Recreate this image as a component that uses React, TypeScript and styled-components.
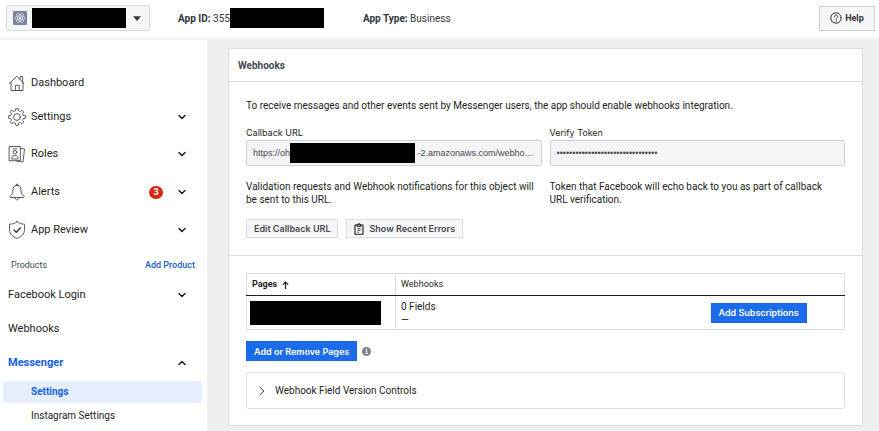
import React from "react";
import styled, { createGlobalStyle, css } from "styled-components";

const GlobalStyle = createGlobalStyle`
  *, *::before, *::after { box-sizing: border-box; }
  html, body { margin: 0; height: 100%; }
  body { background: #efefef; color: #1c1e21; font: 10px/13px Roboto, "Noto Sans", sans-serif; overflow: hidden; }
  #root { height: 100%; }
  button, input { font: inherit; color: inherit; }
  svg { display: block; flex: none; }
`;

const Page = styled.div`
  display: flex;
  flex-direction: column;
  height: 100%;
`;

const TopBar = styled.header`
  display: flex;
  align-items: center;
  height: 40px;
  flex: none;
  padding: 0 4px 2px 6px;
  background: #fff;
  border-bottom: 2px solid #f2f2f2;
  color: #32363d;
`;

const AppPicker = styled.button`
  display: flex;
  align-items: center;
  width: 144px;
  height: 26px;
  padding: 0 8px 0 6px;
  background: #f5f6f7;
  border: 1px solid #d8dade;
  border-radius: 2px;
`;

const Redaction = styled.span<{ $w: number; $h: number }>`
  display: block;
  flex: none;
  width: ${(p) => p.$w}px;
  height: ${(p) => p.$h}px;
  background: #000;
`;

const PickerName = styled.span`
  margin: 0 7px 0 5px;
`;

const Fact = styled.div<{ $gap: number }>`
  display: flex;
  align-items: center;
  margin-left: ${(p) => p.$gap}px;
  white-space: pre;
`;

const HelpButton = styled.button`
  display: flex;
  align-items: center;
  justify-content: center;
  gap: 3px;
  width: 56px;
  height: 25px;
  margin-left: auto;
  padding: 0;
  background: #f5f6f7;
  border: 1px solid #ccd0d5;
  font-size: 9px;
  font-weight: 700;
`;

const Body = styled.div`
  display: flex;
  flex: 1;
  min-height: 0;
`;

const Sidebar = styled.nav`
  flex: none;
  width: 207px;
  padding: 27px 5px 0 3px;
  background: #fff;
  font-size: 11px;
  line-height: 16px;
`;

const NavRow = styled.button<{ $active?: boolean; $h: number }>`
  display: flex;
  align-items: center;
  width: 100%;
  height: ${(p) => p.$h}px;
  padding: 0 16px 0 5px;
  background: none;
  border: 0;
  text-align: left;
  ${(p) =>
    p.$active &&
    css`
      color: #1461e3;
      font-weight: 700;
    `}
  svg.lead { margin-right: 5px; }
`;

const NavLabel = styled.span`
  flex: 1;
`;

const Badge = styled.span`
  width: 14px;
  margin-right: 15px;
  border-radius: 7px;
  background: #d5290f;
  color: #fff;
  font-size: 9px;
  font-weight: 700;
  line-height: 13px;
  text-align: center;
`;

const ProductsRow = styled.div`
  display: flex;
  align-items: center;
  justify-content: space-between;
  height: 32px;
  padding: 0 7px 0 8px;
  color: #444950;
  font-size: 9px;
  a { color: #1461c8; font-weight: 500; text-decoration: none; }
`;

const SubNav = styled.div`
  padding-top: 4px;
`;

const SubLink = styled.a<{ $active?: boolean }>`
  display: block;
  height: 22px;
  padding-left: 28px;
  border-radius: 4px;
  color: #1c1e21;
  font-size: 10px;
  line-height: 22px;
  text-decoration: none;
  & + & { margin-top: 2px; }
  ${(p) =>
    p.$active &&
    css`
      background: #e4eefd;
      color: #1461e3;
      font-weight: 700;
    `}
`;

const Main = styled.main`
  flex: 1;
  min-width: 0;
  padding: 8px 16px 0 21px;
`;

const Card = styled.section`
  background: #fff;
  border: 1px solid #dadcde;
`;

const CardTitle = styled.h2`
  margin: 0;
  padding: 10px 9px 9px;
  border-bottom: 1px solid #dadde1;
  color: #444950;
  font-size: 10px;
  line-height: 13px;
  font-weight: 700;
`;

const Section = styled.div`
  padding: 17px;
  & + & {
    padding-bottom: 16px;
    border-top: 1px solid #dadde1;
  }
`;

const Intro = styled.p`
  margin: 0 0 14px;
`;

const Fields = styled.div`
  display: grid;
  grid-template-columns: 1fr 1fr;
  gap: 8px;
`;

const FieldLabel = styled.label`
  display: block;
  margin-bottom: 1px;
  font-family: Inter, sans-serif;
  font-size: 9px;
  line-height: 13px;
`;

const InputWrap = styled.div`
  position: relative;
`;

const TextInput = styled.input`
  display: block;
  width: 100%;
  height: 26px;
  padding: 0 6px;
  background: #f4f5f7;
  border: 1px solid #ccd0d5;
  border-radius: 3px;
  color: #444950;
  font: 9px "Liberation Sans", sans-serif;
`;

const InputMask = styled(Redaction)`
  position: absolute;
  top: 3px;
  left: 44px;
`;

const FieldNote = styled.p`
  margin: 14px 0 0;
  padding-right: 4px;
`;

const Actions = styled.div<{ $top: number; $gap: number }>`
  display: flex;
  align-items: center;
  gap: ${(p) => p.$gap}px;
  margin-top: ${(p) => p.$top}px;
`;

const Button = styled.button<{ $primary?: boolean }>`
  display: inline-flex;
  align-items: center;
  gap: 5px;
  height: ${(p) => (p.$primary ? 20 : 19)}px;
  padding: 0 7px;
  border: 1px solid ${(p) => (p.$primary ? "#1769ea" : "#dadde1")};
  background: ${(p) => (p.$primary ? "#1a6ced" : "#f5f6f7")};
  color: ${(p) => (p.$primary ? "#fff" : "#444950")};
  font-family: Inter, sans-serif;
  font-size: 9px;
  font-weight: 600;
  white-space: nowrap;
`;

const PagesTable = styled.table`
  width: 100%;
  border-collapse: collapse;
  border: 1px solid #dadde1;
  th, td { padding: 0 5px; text-align: left; }
  th { height: 22px; font-size: 9px; border-bottom: 1px solid #1c1e21; }
  td { height: 34px; }
  th:first-child, td:first-child { width: 149px; border-right: 1px solid #dadde1; }
  td:first-child { padding-left: 3px; }
  th:nth-child(2) { font-weight: 400; }
  td:last-child { width: 139px; }
`;

const SortLabel = styled.span`
  display: flex;
  align-items: center;
  gap: 5px;
`;

const Disclosure = styled.button`
  display: flex;
  align-items: center;
  gap: 9px;
  width: 100%;
  height: 37px;
  margin-top: 11px;
  padding: 0 11px;
  background: #fff;
  border: 1px solid #dadde1;
  border-radius: 3px;
`;

const Chevron = ({ up = false }: { up?: boolean }) => (
  <svg width="8" height="6" viewBox="0 0 8 6" fill="none" stroke="#1c1e21" strokeWidth="1.5" strokeLinecap="round" strokeLinejoin="round">
    <path d={up ? "M1 4.5 4 1.5 7 4.5" : "M1 1.5 4 4.5 7 1.5"} />
  </svg>
);

const lead = {
  className: "lead",
  width: 18,
  height: 18,
  viewBox: "0 0 18 18",
  fill: "none",
  stroke: "#333",
  strokeWidth: 0.8,
  strokeLinejoin: "round" as const,
  strokeLinecap: "round" as const,
};

const HomeIcon = () => (
  <svg {...lead}>
    <path d="M1.2 9.6 9 2.2l6.8 7.4M3 8.2v8.3h12V8.6M7.4 16.5v-5.3h3.8v5.3M12 5.3V2.4h2.6v5.5" />
  </svg>
);

const gearPath = Array.from({ length: 8 }, (_, i) => {
  const at = (r: number, deg: number) => {
    const a = ((i * 45 + deg) * Math.PI) / 180;
    return `${(9 + r * Math.cos(a)).toFixed(2)} ${(9 + r * Math.sin(a)).toFixed(2)}`;
  };
  return `${i ? "L" : "M"}${at(6.5, -14)}L${at(8.4, -9)}L${at(8.4, 9)}L${at(6.5, 14)}L${at(6.3, 22)}`;
}).join("") + "Z";

const GearIcon = () => (
  <svg {...lead}>
    <path d={gearPath} />
    <circle cx="9" cy="9" r="3.4" />
  </svg>
);

const RolesIcon = () => (
  <svg {...lead}>
    <path d="M1.5 1.5h10.8v14.2H1.5zM12.6 3.4l3.9.6-1.5 13-6.2-.9" />
    <circle cx="6.9" cy="7.2" r="1.8" />
    <path d="M3.8 13.6v-.8c0-1.3 1-2.3 3.1-2.3s3.1 1 3.1 2.3v.8zM5 3.9h4" />
  </svg>
);

const BellIcon = () => (
  <svg {...lead}>
    <path d="M9 2.2c-2.7 0-4 2-4 4.8 0 3.4-.9 4.8-2.8 6-.7.5-.4 1.5.4 1.5h12.8c.8 0 1.1-1 .4-1.5-1.9-1.2-2.8-2.600-2.8-6 0-2.800-1.300-4.800-4-4.800ZM8 2.200c0-1.700 2-1.700 2 0M6.900 14.700c0 3 4.200 3 4.200 0" />
  </svg>
);

const ShieldIcon = () => (
  <svg {...lead}>
    <path d="M9 .7c2 1.7 4.5 2.4 7.5 2.5v5.5c0 4.600-3.400 7.100-7.500 8.700-4.100-1.600-7.500-4.100-7.500-8.700V3.200C4.500 3.100 7 2.400 9 .7Z" />
    <path d="m6 9 2.200 2.200L12.300 7" strokeWidth="1.4" />
  </svg>
);

const AtomIcon = () => (
  <svg width="14" height="14" viewBox="0 0 14 14" fill="none" stroke="#dfe3ec" strokeWidth=".7">
    <rect width="14" height="14" rx="1" fill="#79839c" stroke="none" />
    <ellipse cx="7" cy="7" rx="5.2" ry="2.1" />
    <ellipse cx="7" cy="7" rx="5.2" ry="2.1" transform="rotate(60 7 7)" />
    <ellipse cx="7" cy="7" rx="5.2" ry="2.1" transform="rotate(120 7 7)" />
    <circle cx="7" cy="7" r=".9" fill="#fff" />
  </svg>
);

const HelpIcon = () => (
  <svg width="12" height="12" viewBox="0 0 12 12" fill="none" stroke="#32363d" strokeWidth="1" strokeLinecap="round">
    <circle cx="6" cy="6" r="5.2" />
    <path d="M4.4 4.8c0-2.2 3.3-2.1 3.300-.1C7.700 5.900 6 5.800 6 7.200" />
    <circle cx="6" cy="8.9" r=".3" fill="#32363d" strokeWidth=".5" />
  </svg>
);

const ClipboardIcon = () => (
  <svg width="10" height="12" viewBox="0 0 10 12" fill="none" stroke="#1c1e21" strokeWidth="1.1">
    <path d="M3 2H1v9.3h8V2H7" strokeLinejoin="round" />
    <path d="M3.2 3.2V1.8h.9a.9.9 0 0 1 1.8 0h.9v1.4z" />
    <path d="M3.4 5.4h3.2M3.4 7.3h3.2M3.4 9.2h1.6" strokeWidth=".8" />
  </svg>
);

const SortIcon = () => (
  <svg width="7" height="8" viewBox="0 0 7 8" fill="none" stroke="#1c1e21" strokeWidth="1.2">
    <path d="M3.5 8V1M.8 3.6 3.5 1l2.7 2.6" />
  </svg>
);

const InfoIcon = () => (
  <svg width="9" height="9" viewBox="0 0 9 9">
    <circle cx="4.5" cy="4.5" r="4.5" fill="#7b808a" />
    <path d="M3.5 3.9h1.3v2.6M3.4 6.6h2.4" stroke="#fff" fill="none" />
    <circle cx="4.5" cy="2.2" r=".7" fill="#fff" />
  </svg>
);

const navItems = [
  { label: "Dashboard", icon: <HomeIcon />, height: 32, leaf: true },
  { label: "Settings", icon: <GearIcon />, height: 36 },
  { label: "Roles", icon: <RolesIcon />, height: 38 },
  { label: "Alerts", icon: <BellIcon />, height: 38, count: 3 },
  { label: "App Review", icon: <ShieldIcon />, height: 38 },
];

const callbackUrl = "https://oh" + "\u00a0".repeat(51) + "-2.amazonaws.com/webho…";

export default function App() {
  return (
    <Page>
      <GlobalStyle />
      <TopBar>
        <AppPicker aria-label="Select app">
          <AtomIcon />
          <PickerName>
            <Redaction $w={94} $h={20} />
          </PickerName>
          <svg width="8" height="5" viewBox="0 0 8 5">
            <path d="M0 .3h8L4 5z" fill="#32363d" />
          </svg>
        </AppPicker>
        <Fact $gap={28}>
          <b>App ID:</b> 355
          <Redaction $w={94} $h={20} />
        </Fact>
        <Fact $gap={39}>
          <b>App Type:</b> Business
        </Fact>
        <HelpButton>
          <HelpIcon />
          Help
        </HelpButton>
      </TopBar>
      <Body>
        <Sidebar>
          {navItems.map((item) => (
            <NavRow key={item.label} $h={item.height}>
              {item.icon}
              <NavLabel>{item.label}</NavLabel>
              {item.count && <Badge>{item.count}</Badge>}
              {!item.leaf && <Chevron />}
            </NavRow>
          ))}
          <ProductsRow>
            <span>Products</span>
            <a href="#add-product">Add Product</a>
          </ProductsRow>
          <NavRow $h={28}>
            <NavLabel>Facebook Login</NavLabel>
            <Chevron />
          </NavRow>
          <NavRow $h={40}>
            <NavLabel>Webhooks</NavLabel>
          </NavRow>
          <NavRow $h={28} $active>
            <NavLabel>Messenger</NavLabel>
            <Chevron up />
          </NavRow>
          <SubNav>
            <SubLink href="#settings" $active>Settings</SubLink>
            <SubLink href="#instagram">Instagram Settings</SubLink>
          </SubNav>
        </Sidebar>
        <Main>
          <Card>
            <CardTitle>Webhooks</CardTitle>
            <Section>
              <Intro>
                To receive messages and other events sent by Messenger users, the app should enable webhooks integration.
              </Intro>
              <Fields>
                <div>
                  <FieldLabel htmlFor="callback">Callback URL</FieldLabel>
                  <InputWrap>
                    <TextInput id="callback" readOnly value={callbackUrl} />
                    <InputMask $w={125} $h={20} />
                  </InputWrap>
                  <FieldNote>
                    Validation requests and Webhook notifications for this object will be sent to this URL.
                  </FieldNote>
                </div>
                <div>
                  <FieldLabel htmlFor="token">Verify Token</FieldLabel>
                  <TextInput id="token" type="password" readOnly value={"x".repeat(32)} />
                  <FieldNote>Token that Facebook will echo back to you as part of callback URL verification.</FieldNote>
                </div>
              </Fields>
              <Actions $top={13} $gap={8}>
                <Button>Edit Callback URL</Button>
                <Button>
                  <ClipboardIcon />
                  Show Recent Errors
                </Button>
              </Actions>
            </Section>
            <Section>
              <PagesTable>
                <thead>
                  <tr>
                    <th>
                      <SortLabel>
                        Pages <SortIcon />
                      </SortLabel>
                    </th>
                    <th colSpan={2}>Webhooks</th>
                  </tr>
                </thead>
                <tbody>
                  <tr>
                    <td>
                      <Redaction $w={131} $h={24} />
                    </td>
                    <td>
                      0 Fields
                      <br />—
                    </td>
                    <td>
                      <Button $primary>Add Subscriptions</Button>
                    </td>
                  </tr>
                </tbody>
              </PagesTable>
              <Actions $top={11} $gap={5}>
                <Button $primary>Add or Remove Pages</Button>
                <InfoIcon />
              </Actions>
              <Disclosure aria-expanded="false">
                <svg width="8" height="10" viewBox="0 0 8 10" fill="none" stroke="#444950">
                  <path d="m1.5.8 4.5 4.2-4.5 4.2" />
                </svg>
                Webhook Field Version Controls
              </Disclosure>
            </Section>
          </Card>
        </Main>
      </Body>
    </Page>
  );
}
